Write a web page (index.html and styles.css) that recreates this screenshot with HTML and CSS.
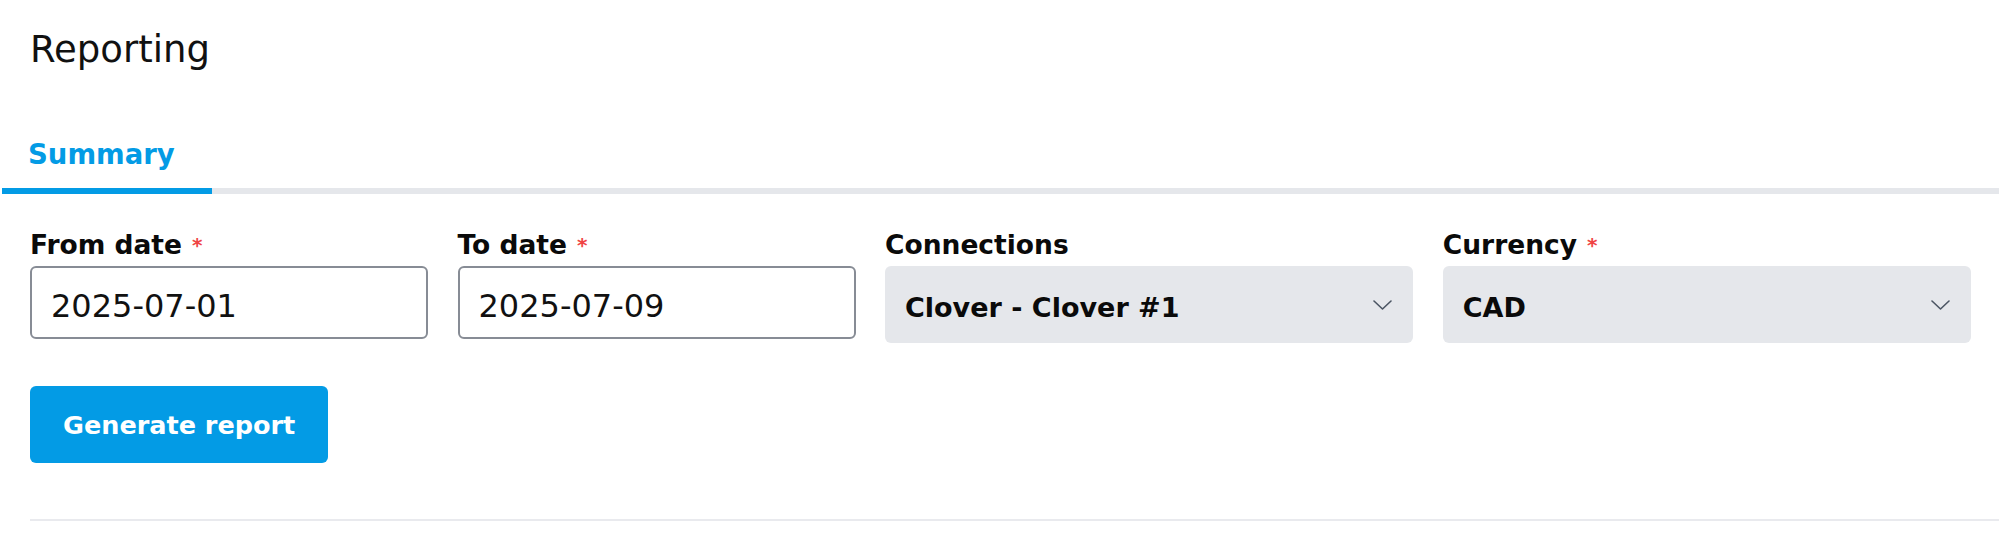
FILE: index.html
```html
<!DOCTYPE html>
<html lang="en">
<head>
<meta charset="utf-8">
<title>Reporting</title>
<link rel="stylesheet" href="styles.css">
</head>
<body>
<main class="page">
  <h1 class="title">Reporting</h1>
  <nav class="tabs">
    <a class="tab tab-active" href="#">Summary</a>
  </nav>
  <form class="report-form">
    <div class="fields">
      <div class="field">
        <label class="label" for="from">From date<span class="req">*</span></label>
        <input class="input" id="from" type="text" value="2025-07-01">
      </div>
      <div class="field">
        <label class="label" for="to">To date<span class="req">*</span></label>
        <input class="input" id="to" type="text" value="2025-07-09">
      </div>
      <div class="field">
        <label class="label">Connections</label>
        <div class="select">
          <span class="select-value">Clover - Clover #1</span>
          <svg class="chevron" width="19" height="10" viewBox="0 0 19 10"><polyline points="1,1 9.5,9 18,1" fill="none" stroke="#4b5563" stroke-width="1.6" stroke-linecap="round" stroke-linejoin="round"/></svg>
        </div>
      </div>
      <div class="field">
        <label class="label">Currency<span class="req">*</span></label>
        <div class="select">
          <span class="select-value">CAD</span>
          <svg class="chevron" width="19" height="10" viewBox="0 0 19 10"><polyline points="1,1 9.5,9 18,1" fill="none" stroke="#4b5563" stroke-width="1.6" stroke-linecap="round" stroke-linejoin="round"/></svg>
        </div>
      </div>
    </div>
    <button class="btn" type="button">Generate report</button>
  </form>
  <hr class="divider">
</main>
</body>
</html>
```

FILE: styles.css
```css
* { box-sizing: border-box; }

html, body {
  margin: 0;
  padding: 0;
  background: #ffffff;
}

body {
  font-family: "DejaVu Sans", "Liberation Sans", sans-serif;
  color: #111111;
}

.page {
  padding-top: 28px;
}

.title {
  margin: 0;
  padding-left: 30px;
  font-size: 37px;
  line-height: 44px;
  font-weight: normal;
  color: #111111;
}

.tabs {
  display: flex;
  margin: 64px 0 0 2px;
  border-bottom: 6px solid #e5e7eb;
}

.tab {
  display: block;
  padding: 0 37px 16px 26px;
  margin-bottom: -6px;
  font-size: 27.5px;
  line-height: 36px;
  font-weight: bold;
  text-decoration: none;
  color: #039be5;
  border-bottom: 6px solid #039be5;
}

.report-form {
  padding: 0 28px 0 30px;
}

.fields {
  display: grid;
  grid-template-columns: 398px 398px 1fr 1fr;
  column-gap: 29.5px;
  align-items: start;
  margin-top: 35px;
}

.field {
  display: flex;
  flex-direction: column;
}

.label {
  display: block;
  margin-bottom: 5px;
  font-size: 26.5px;
  line-height: 32px;
  font-weight: bold;
  color: #0a0a0a;
}

.req {
  margin-left: 10px;
  font-size: 20px;
  color: #ef4444;
  vertical-align: 2px;
}

.input {
  width: 100%;
  height: 73px;
  padding: 6px 19px 0;
  border: 2px solid #878c95;
  border-radius: 6px;
  background: #ffffff;
  font-family: inherit;
  font-size: 32px;
  color: #111111;
  outline: none;
}

.select {
  display: flex;
  align-items: center;
  justify-content: space-between;
  height: 77px;
  padding: 0 21px 0 20px;
  border-radius: 6px;
  background: #e5e7eb;
}

.select-value {
  padding-top: 6px;
  font-size: 27px;
  line-height: 34px;
  font-weight: bold;
  color: #0a0a0a;
}

.chevron {
  display: block;
  flex: none;
}

.btn {
  display: block;
  height: 77px;
  margin-top: 43px;
  padding: 0 33px;
  border: none;
  border-radius: 6px;
  background: #039be5;
  color: #ffffff;
  font-family: inherit;
  font-size: 25.5px;
  font-weight: bold;
  cursor: pointer;
}

.divider {
  height: 2px;
  margin: 56px 0 0 30px;
  border: 0;
  background: #e9eaee;
}
```
